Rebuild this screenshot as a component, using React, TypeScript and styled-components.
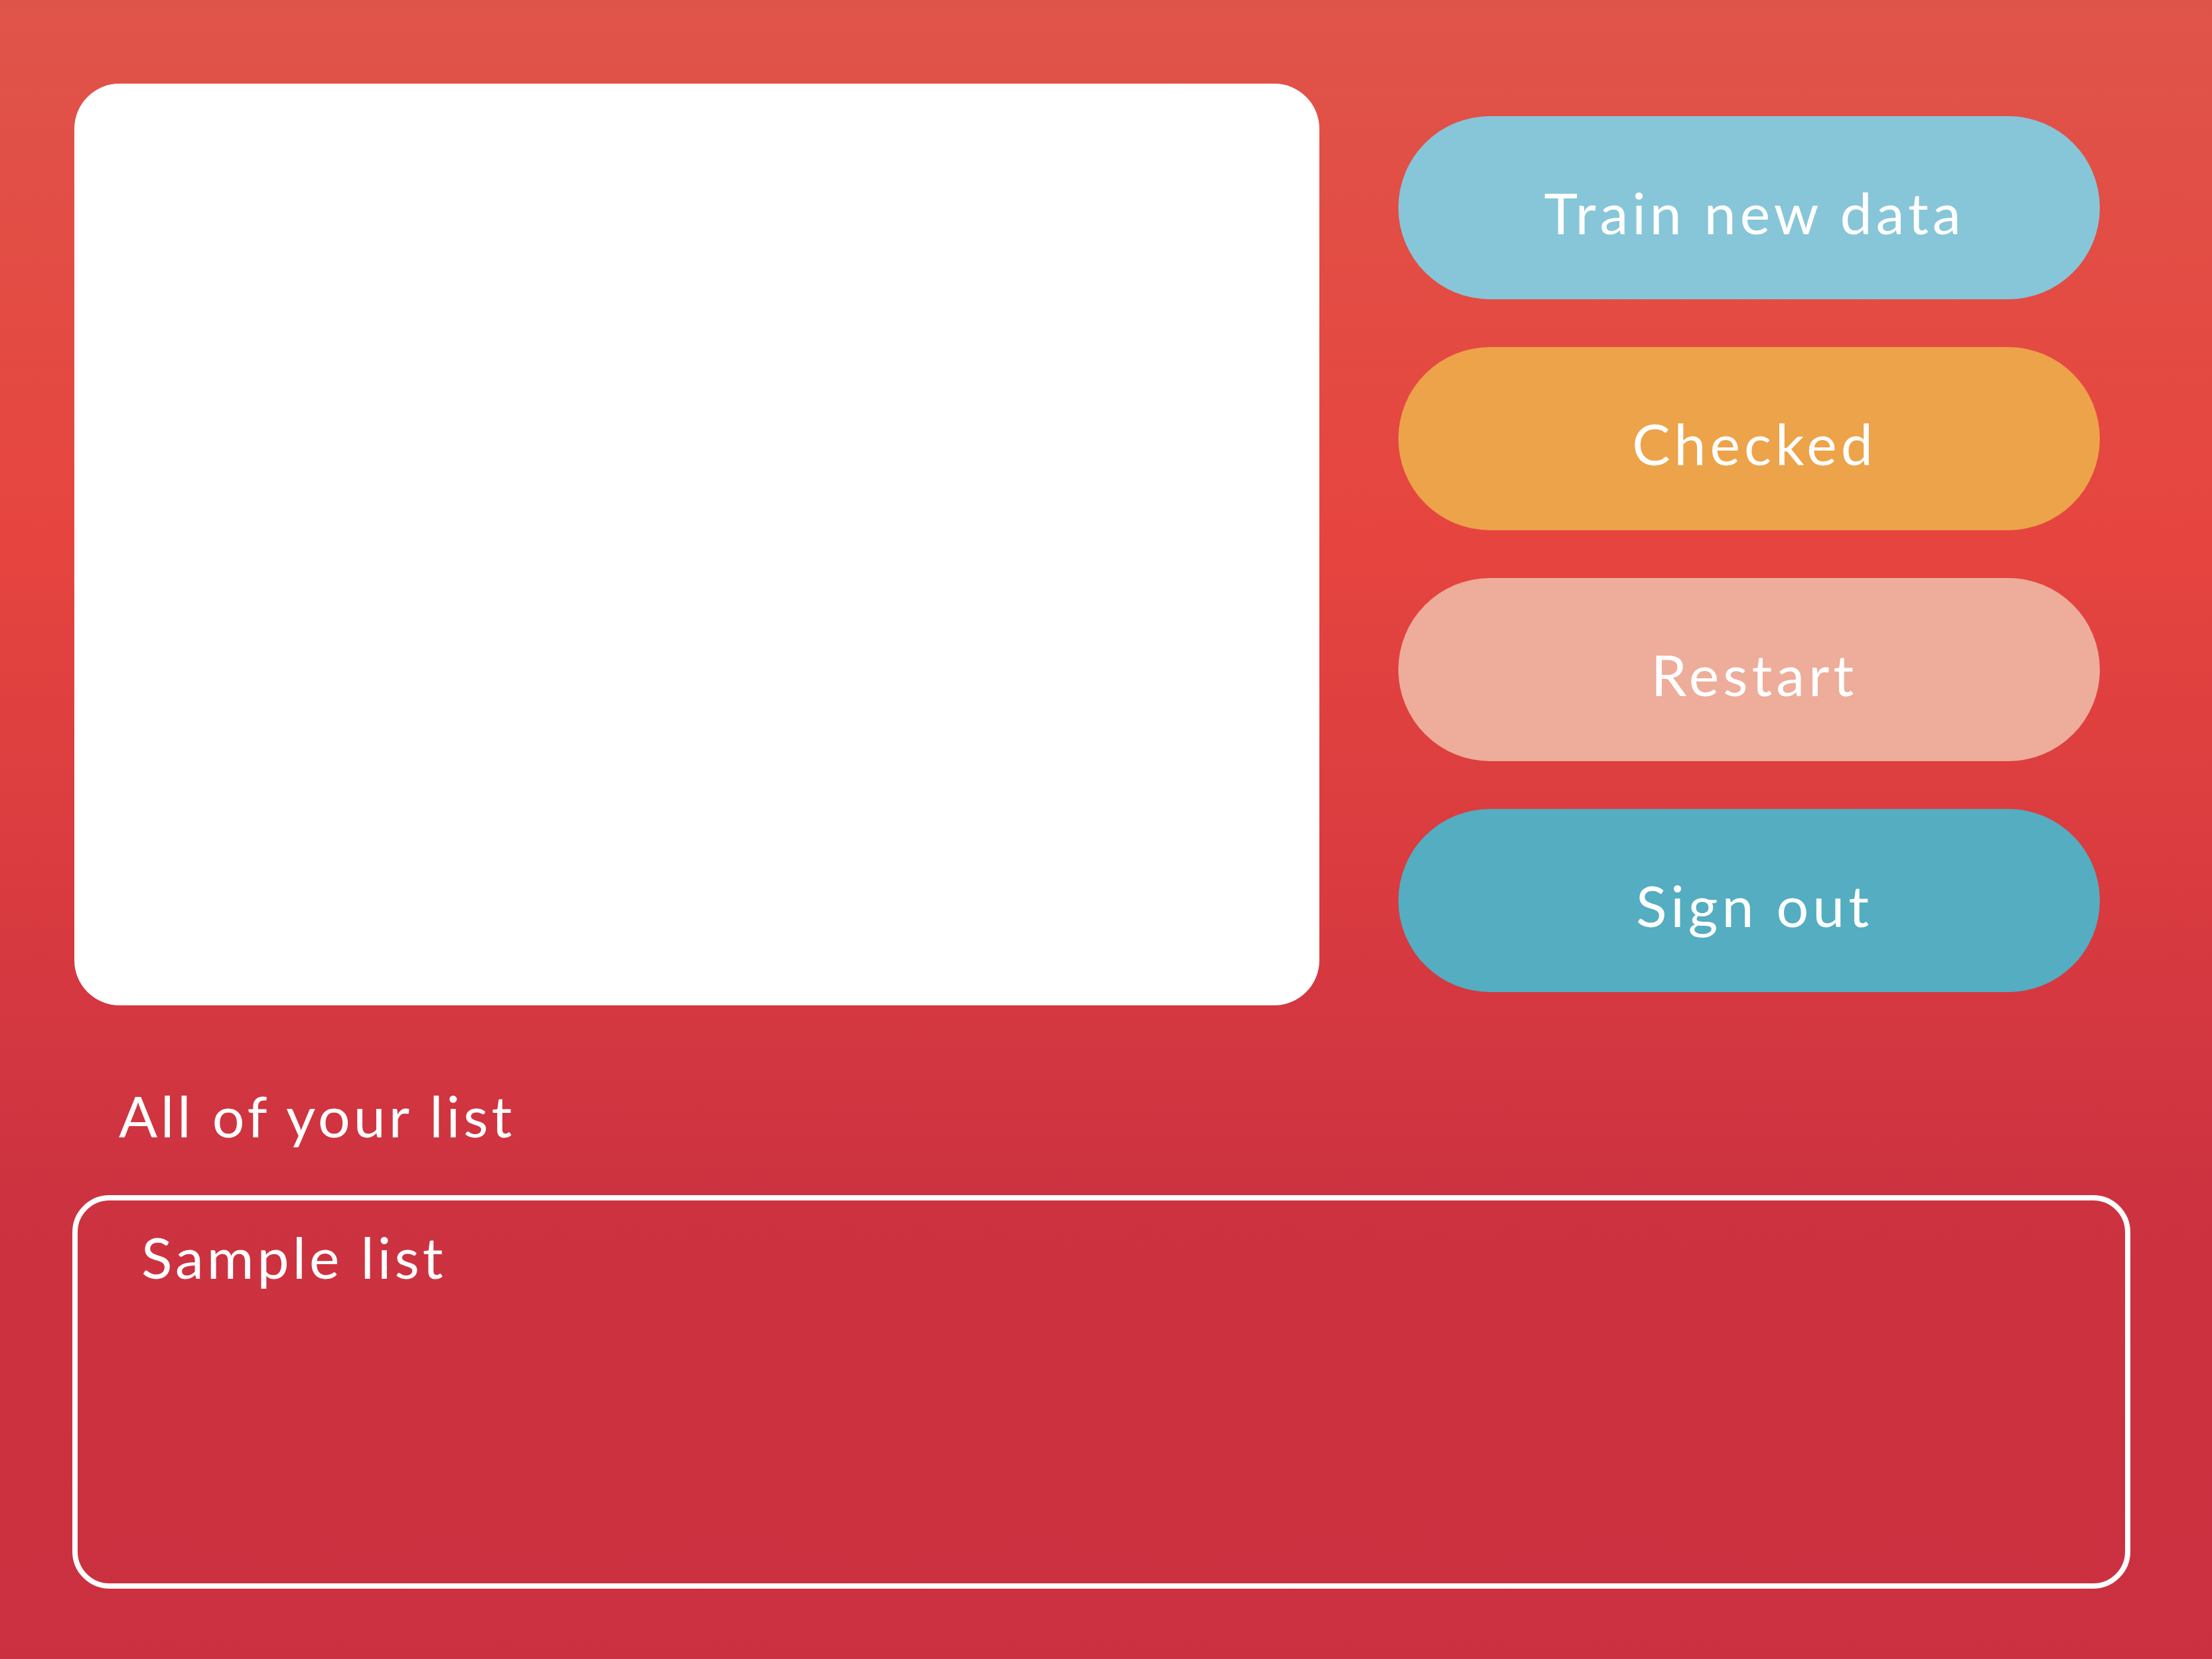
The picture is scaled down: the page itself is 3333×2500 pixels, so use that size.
import React from 'react';
import styled, {createGlobalStyle} from 'styled-components';

const GlobalStyle = createGlobalStyle`
  html, body {
    margin: 0;
    padding: 0;
  }

  body {
    font-family: Lato, "Liberation Sans", sans-serif;
  }
`;

const Page = styled.div`
  min-height: 2500px;
  box-sizing: border-box;
  padding-top: 126px;
  background: linear-gradient(to bottom, #df5449 0%, #e6453f 32%, #cd3240 72%, #cb3040 100%);
  color: white;
`;

const TopRow = styled.div`
  display: flex;
  align-items: flex-start;
  padding-left: 112px;
  gap: 119px;
`;

const Screen = styled.div`
  width: 1876px;
  height: 1389px;
  background: #fff;
  border-radius: 68px;
`;

const ButtonStack = styled.div`
  display: flex;
  flex-direction: column;
  gap: 72px;
  margin-top: 49px;
  width: 1057px;
`;

const PillButton = styled.button<{ $bg: string }>`
  height: 276px;
  border: none;
  border-radius: 138px;
  background: ${props => props.$bg};
  color: white;
  font-family: Lato, "Liberation Sans", sans-serif;
  font-size: 86px;
  line-height: 1;
  letter-spacing: 6px;
  padding: 14px 0 0 16px;
  display: flex;
  align-items: center;
  justify-content: center;
  cursor: pointer;
`;

const SectionTitle = styled.h2`
  margin: 123px 0 0;
  padding-left: 179px;
  font-size: 86px;
  font-weight: normal;
  line-height: 1;
  letter-spacing: 5px;
`;

const ListBox = styled.ul`
  list-style: none;
  margin: 77px 0 0 109px;
  padding: 42px 96px;
  width: 3101px;
  height: 593px;
  box-sizing: border-box;
  border: 8px solid #fff;
  border-radius: 56px;

  > li {
    font-size: 86px;
    line-height: 1;
    letter-spacing: 5px;
  }
`;

const buttons = [
  {label: 'Train new data', bg: '#87c6d8'},
  {label: 'Checked', bg: '#eda349'},
  {label: 'Restart', bg: '#edad9a'},
  {label: 'Sign out', bg: '#54adc1'},
];

const lists = ['Sample list'];

export default function App() {
  return (
    <>
      <GlobalStyle/>
      <Page>
        <TopRow>
          <Screen/>
          <ButtonStack>
            {buttons.map(b => (
              <PillButton key={b.label} $bg={b.bg}>{b.label}</PillButton>
            ))}
          </ButtonStack>
        </TopRow>
        <SectionTitle>All of your list</SectionTitle>
        <ListBox>
          {lists.map(name => <li key={name}>{name}</li>)}
        </ListBox>
      </Page>
    </>
  );
}
